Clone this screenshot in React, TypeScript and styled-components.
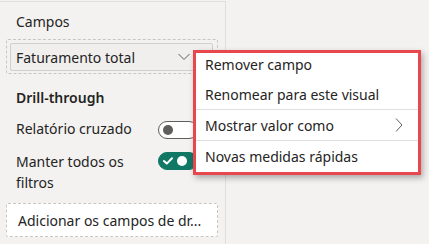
import React from "react";
import styled, { createGlobalStyle } from "styled-components";

const Global = createGlobalStyle`
  html, body { margin: 0; padding: 0; background: #f3f2f1; }
  body { font-family: "Noto Sans", "Open Sans", sans-serif; color: #252423; }
  #root { width: 429px; height: 244px; overflow: hidden; }
`;

const Page = styled.div`
  position: relative;
  display: flex;
  width: 429px;
  height: 244px;
  padding-top: 1px;
  box-sizing: border-box;
  background: #f3f2f1;
`;

const Panel = styled.div`
  width: 226px;
  height: 100%;
  box-sizing: border-box;
  border-top: 1px solid #e1dfdd;
  border-right: 1px solid #e1dfdd;
  padding: 0 7px 0 6px;
  display: flex;
  flex-direction: column;
`;

const Label = styled.div<{ $top: number; $bold?: boolean }>`
  margin-top: ${(p) => p.$top}px;
  padding-left: 10px;
  font-size: 14px;
  line-height: 20px;
  font-weight: ${(p) => (p.$bold ? 600 : 400)};
`;

const Well = styled.div<{ $top: number; $white?: boolean }>`
  margin-top: ${(p) => p.$top}px;
  border: 1px dashed #c8c6c4;
  border-radius: 2px;
  background: ${(p) => (p.$white ? "#ffffff" : "transparent")};
  padding: ${(p) => (p.$white ? "0 0 0 11px" : "3px 4px 2px 3px")};
  height: ${(p) => (p.$white ? "34px" : "auto")};
  box-sizing: border-box;
  display: flex;
  align-items: center;
  font-size: 14px;
`;

const Field = styled.div`
  flex: 1;
  height: 28px;
  box-sizing: border-box;
  border: 1px solid #d2d0ce;
  border-radius: 2px;
  background: #f0efee;
  display: flex;
  align-items: center;
  justify-content: space-between;
  padding: 0 22px 0 5px;
  font-size: 14px;
`;

const Row = styled.div<{ $top: number }>`
  margin-top: ${(p) => p.$top}px;
  padding-left: 10px;
  display: grid;
  grid-template-columns: 142px 40px;
  align-items: start;
  font-size: 14px;
  line-height: 21px;
`;

const Toggle = styled.div<{ $on?: boolean; $offset: number }>`
  margin-top: ${(p) => p.$offset}px;
  width: 40px;
  height: 18px;
  box-sizing: border-box;
  border-radius: 10px;
  border: 1px solid ${(p) => (p.$on ? "#117865" : "#605e5c")};
  background: ${(p) => (p.$on ? "#117865" : "#ffffff")};
  display: flex;
  align-items: center;
  padding: 0 4px;
  gap: 4px;
`;

const Knob = styled.span<{ $on?: boolean }>`
  width: 10px;
  height: 10px;
  border-radius: 50%;
  background: ${(p) => (p.$on ? "#ffffff" : "#605e5c")};
`;

const Menu = styled.div`
  position: absolute;
  left: 193px;
  top: 50px;
  width: 228px;
  height: 125px;
  box-sizing: border-box;
  border: 3px solid #e8474e;
  background: #ffffff;
  box-shadow: 2px 3px 6px rgba(0, 0, 0, 0.3);
  overflow: hidden;
`;

const MenuList = styled.div`
  margin-top: -4px;
  display: flex;
  flex-direction: column;
`;

const MenuItem = styled.div<{ $sep?: boolean }>`
  height: 30px;
  border-top: ${(p) => (p.$sep ? "1px solid #e1dfdd" : "none")};
  display: flex;
  align-items: center;
  justify-content: space-between;
  padding: 0 15px 0 9px;
  font-size: 14px;
  color: #252423;
`;

const Chevron = ({ dir }: { dir: "down" | "right" }) =>
  dir === "down" ? (
    <svg width="12" height="8" viewBox="0 0 12 8">
      <polyline points="0.5,1 6,6.5 11.5,1" fill="none" stroke="#605e5c" strokeWidth="1" />
    </svg>
  ) : (
    <svg width="8" height="14" viewBox="0 0 8 14">
      <polyline points="1,0.5 7,7 1,13.5" fill="none" stroke="#605e5c" strokeWidth="1" />
    </svg>
  );

const Check = () => (
  <svg width="10" height="8" viewBox="0 0 10 8">
    <polyline points="1,4 3.8,6.6 9,1.2" fill="none" stroke="#ffffff" strokeWidth="2" strokeLinecap="round" strokeLinejoin="round" />
  </svg>
);

export default function App() {
  return (
    <>
      <Global />
      <Page>
        <Panel>
          <Label $top={10}>Campos</Label>
          <Well $top={7}>
            <Field>
              <span>Faturamento total</span>
              <Chevron dir="down" />
            </Field>
          </Well>
          <Label $top={14} $bold>
            Drill-through
          </Label>
          <Row $top={10}>
            <span>Relatório cruzado</span>
            <Toggle $offset={3}>
              <Knob />
            </Toggle>
          </Row>
          <Row $top={12}>
            <span>Manter todos os filtros</span>
            <Toggle $on $offset={1}>
              <Check />
              <Knob $on />
            </Toggle>
          </Row>
          <Well $top={10} $white>
            Adicionar os campos de dr...
          </Well>
        </Panel>
        <Menu>
          <MenuList>
            <MenuItem>Remover campo</MenuItem>
            <MenuItem>Renomear para este visual</MenuItem>
            <MenuItem $sep>
              <span>Mostrar valor como</span>
              <Chevron dir="right" />
            </MenuItem>
            <MenuItem $sep>Novas medidas rápidas</MenuItem>
          </MenuList>
        </Menu>
      </Page>
    </>
  );
}
